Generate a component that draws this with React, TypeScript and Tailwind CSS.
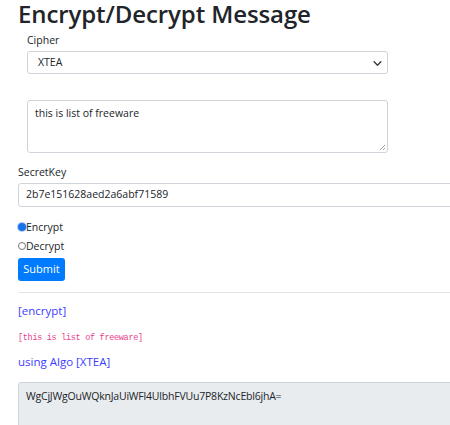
import React from 'react';

const App = () => {
  return (
    <div className="w-[450px] h-[425px] overflow-hidden bg-white text-[#212529] font-['Open_Sans',sans-serif] text-[10.5px]">
      <div className="pl-[18px]">
        <h1 className="text-[24px] leading-[28px] font-semibold tracking-[-0.1px] pt-[0px]">Encrypt/Decrypt Message</h1>

        {/* Cipher */}
        <div className="pl-[9px] w-[370px]">
          <label className="block mt-[3px] leading-[18px]">Cipher</label>
          <div className="relative mt-[2px] h-[23px] border border-[#ced4da] rounded-[3px] flex items-center pl-[10px]">
            <span>XTEA</span>
            <svg className="absolute right-[5px] top-[8px]" width="9" height="7" viewBox="0 0 16 12">
              <path d="M2 3l6 6 6-6" fill="none" stroke="#343a40" strokeWidth="2.5" strokeLinecap="round" strokeLinejoin="round" />
            </svg>
          </div>

          <div className="relative mt-[26px] h-[53px] border border-[#ced4da] rounded-[3px] px-[7px] pt-[5px]">
            <span>this is list of freeware</span>
            <svg className="absolute right-[1px] bottom-[1px]" width="7" height="7" viewBox="0 0 7 7">
              <path d="M6 1L1 6M6 4L4 6" stroke="#888" strokeWidth="0.8" />
            </svg>
          </div>
        </div>

        {/* SecretKey */}
        <label className="block mt-[10px] leading-[18px]">SecretKey</label>
        <div className="mt-[2px] h-[24px] w-[460px] border border-[#ced4da] rounded-[3px] flex items-center pl-[7px]">
          2b7e151628aed2a6abf71589
        </div>

        <div className="mt-[11px] flex items-center leading-[18px]">
          <span className="w-[8px] h-[8px] rounded-full border-[2px] border-[#1a73e8] bg-[#1a73e8] shadow-[0_0_0_1px_#b0cdf5]" />
          <span>Encrypt</span>
        </div>
        <div className="mt-[1px] flex items-center leading-[18px]">
          <span className="w-[8px] h-[8px] rounded-full border border-[#767676] bg-white" />
          <span>Decrypt</span>
        </div>

        <div className="mt-[3px] w-[47px] h-[23px] rounded-[3px] bg-[#007bff] text-white text-[11px] flex items-center justify-center">
          Submit
        </div>

        <div className="mt-[11px] border-t border-[#e5e5e5] w-[440px]" />

        <div className="mt-[9px] text-[#3c3cff] text-[11.5px] leading-[18px]">[encrypt]</div>
        <div className="mt-[11px] text-[#e83e8c] text-[8.5px] leading-[14px] tracking-[-0.3px] font-['Liberation_Mono',monospace]">[this is list of freeware]</div>
        <div className="mt-[8px] text-[#3c3cff] text-[11.5px] leading-[18px]">using Algo [XTEA]</div>

        <div className="mt-[11px] h-[60px] w-[460px] bg-[#e9ecef] border border-[#ced4da] rounded-[3px] pl-[7px] pt-[6px] tracking-[-0.2px]">
          WgCjJWgOuWQknJaUiWFl4UlbhFVUu7P8KzNcEbl6jhA=
        </div>
      </div>
    </div>
  );
};

export default App;
